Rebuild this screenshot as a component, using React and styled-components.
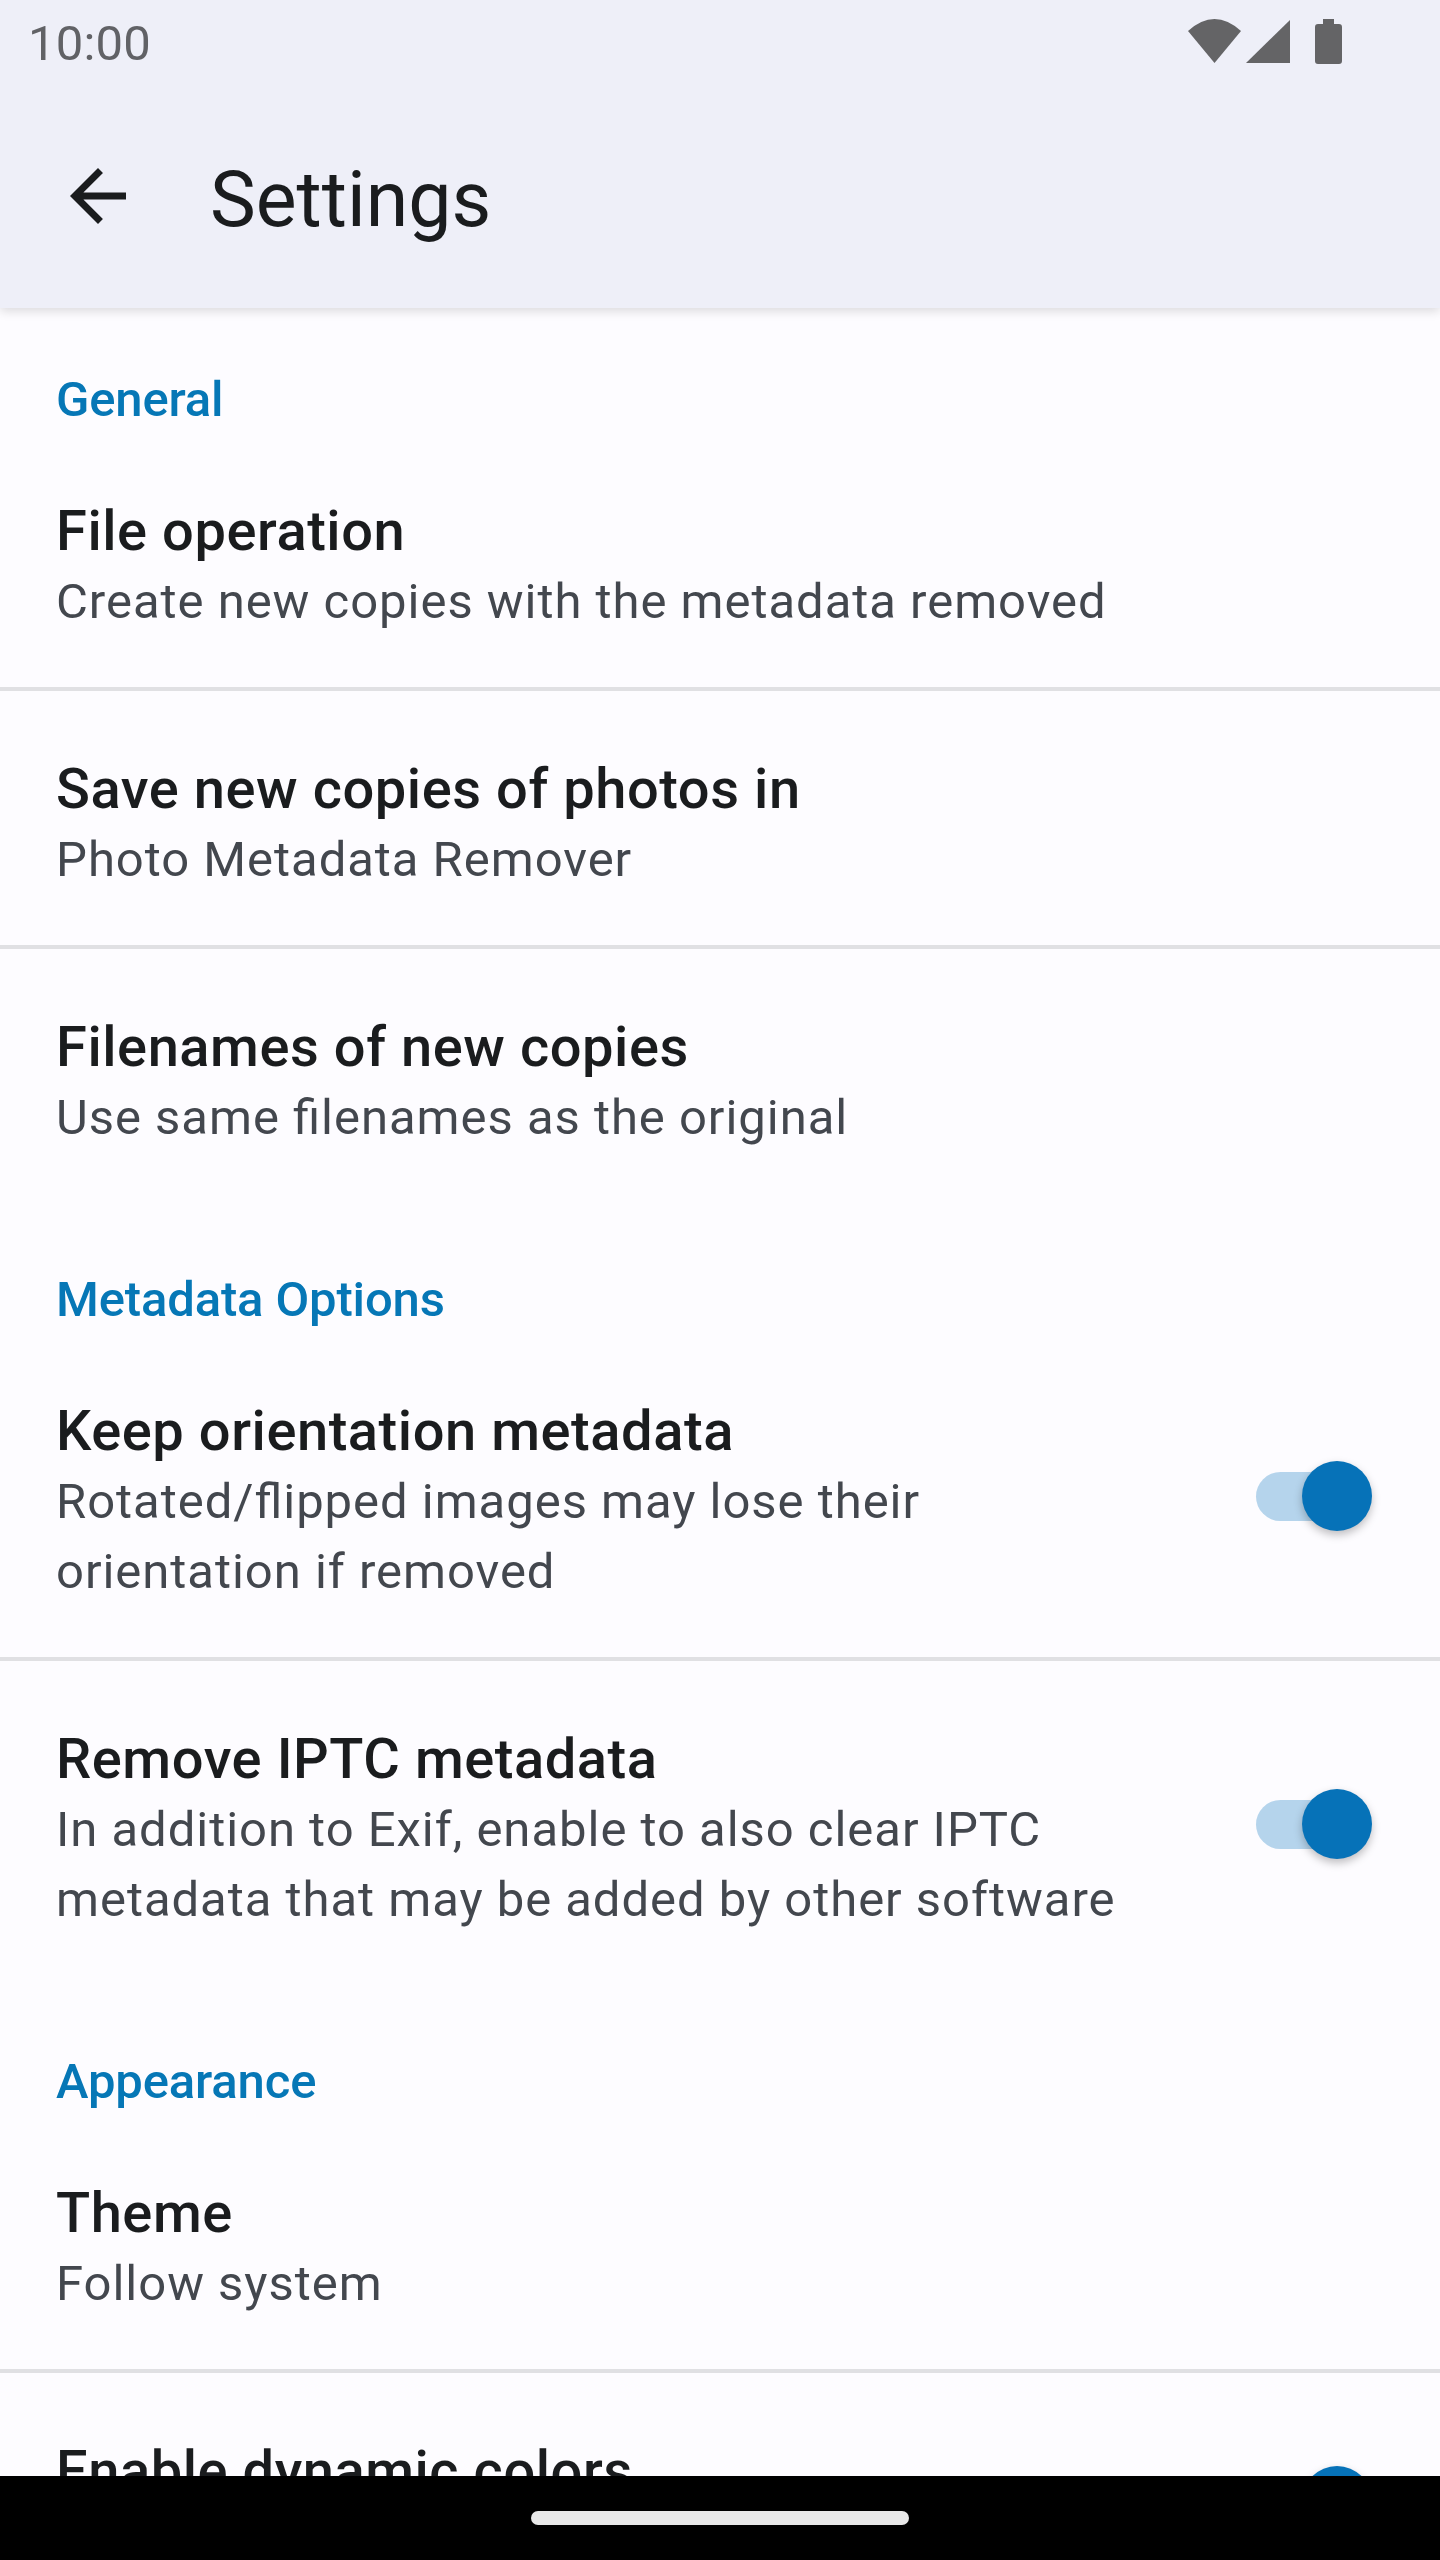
import React from 'react';
import styled, { createGlobalStyle } from 'styled-components';

const GlobalStyle = createGlobalStyle`
  html, body {
    margin: 0;
    padding: 0;
    background: #fdfcff;
  }
  body {
    font-family: Roboto, "Noto Sans", sans-serif;
  }
`;

const Screen = styled.div`
  display: flex;
  flex-direction: column;
  width: 1440px;
  height: 2560px;
  overflow: hidden;
  background: #fdfcff;
`;

const Header = styled.header`
  position: relative;
  z-index: 1;
  flex: none;
  height: 308px;
  box-sizing: border-box;
  background: #eeeff8;
  box-shadow: 0 3px 10px rgba(0, 0, 0, 0.14);
`;

const StatusBar = styled.div`
  display: flex;
  justify-content: space-between;
  height: 98px;
  box-sizing: border-box;
  padding: 0 98px 0 28px;
`;

const Time = styled.span`
  font-size: 49px;
  line-height: 88px;
  letter-spacing: 0.2px;
  color: #616266;
`;

const StatusIcons = styled.div`
  display: flex;
  align-items: flex-start;
  gap: 5px;
  padding-top: 19px;
  & svg {
    fill: #646466;
    display: block;
  }
  & svg:last-child {
    margin-left: 20px;
  }
`;

const Toolbar = styled.div`
  display: flex;
  align-items: center;
  height: 196px;
  padding-left: 56px;
`;

const BackButton = styled.button`
  display: flex;
  width: 84px;
  height: 84px;
  padding: 0;
  border: 0;
  background: none;
  & svg {
    fill: #1a1c1e;
  }
`;

const Title = styled.h1`
  margin: 8px 0 0 70px;
  font-size: 77px;
  font-weight: 400;
  line-height: 100px;
  color: #1a1c1e;
`;

const Content = styled.main`
  flex: 1;
  min-height: 0;
  overflow: hidden;
  padding-top: 55px;
`;

const Section = styled.section`
  & + & {
    padding-top: 60px;
  }
`;

const SectionLabel = styled.h2`
  margin: 0;
  padding: 4px 56px 0;
  font-size: 49px;
  font-weight: 500;
  line-height: 66px;
  letter-spacing: -0.15px;
  color: #0677b6;
`;

const Row = styled.div`
  display: flex;
  align-items: center;
  padding: 62px 72px 50px 56px;
  & + & {
    border-top: 4px solid #e0e0e3;
  }
`;

const Body = styled.div`
  flex: 1;
  min-height: 142px;
  max-width: 1080px;
`;

const RowTitle = styled.div`
  font-size: 56px;
  font-weight: 500;
  line-height: 72px;
  letter-spacing: 0.56px;
  color: #1a1c1e;
`;

const Summary = styled.div`
  font-size: 49px;
  line-height: 70px;
  letter-spacing: 0.97px;
  font-feature-settings: "liga" 1;
  color: #43474e;
`;

const Switch = styled.div`
  position: relative;
  flex: none;
  width: 112px;
  height: 49px;
  margin: 0 0 10px auto;
  border-radius: 25px;
  background: ${(p) => (p.$on ? '#b5d4ec' : '#c4c6cf')};
`;

const Thumb = styled.span`
  position: absolute;
  top: -10.5px;
  right: -4px;
  width: 70px;
  height: 70px;
  border-radius: 50%;
  background: #0672b8;
  box-shadow: 0 4px 8px rgba(0, 0, 0, 0.25);
`;

const NavBar = styled.div`
  position: relative;
  z-index: 1;
  display: flex;
  flex: none;
  justify-content: center;
  height: 84px;
  padding-top: 35px;
  box-sizing: border-box;
  background: #000;
`;

const HomePill = styled.div`
  width: 378px;
  height: 14px;
  border-radius: 7px;
  background: #e9e9e9;
`;

const sections = [
  {
    label: 'General',
    rows: [
      { title: 'File operation', summary: 'Create new copies with the metadata removed' },
      { title: 'Save new copies of photos in', summary: 'Photo Metadata Remover' },
      { title: 'Filenames of new copies', summary: 'Use same filenames as the original' },
    ],
  },
  {
    label: 'Metadata Options',
    rows: [
      {
        title: 'Keep orientation metadata',
        summary: 'Rotated/flipped images may lose their orientation if removed',
        toggle: true,
      },
      {
        title: 'Remove IPTC metadata',
        summary: 'In addition to Exif, enable to also clear IPTC metadata that may be added by other software',
        toggle: true,
      },
    ],
  },
  {
    label: 'Appearance',
    rows: [
      { title: 'Theme', summary: 'Follow system' },
      { title: 'Enable dynamic colors', toggle: true },
    ],
  },
];

const App = () => (
  <>
    <GlobalStyle />
    <Screen>
      <Header>
        <StatusBar>
          <Time>10:00</Time>
          <StatusIcons>
            <svg width="53" height="44" viewBox="0 0 53 44">
              <path d="M0 12Q26.5-12 53 12L26.5 44Z" />
            </svg>
            <svg width="44" height="44" viewBox="0 0 44 44">
              <path d="M0 44 44 1V44Z" />
            </svg>
            <svg width="27" height="45" viewBox="0 0 27 45">
              <path d="M8 0H19V5H24A3 3 0 0 1 27 8V42A3 3 0 0 1 24 45H3A3 3 0 0 1 0 42V8A3 3 0 0 1 3 5H8Z" />
            </svg>
          </StatusIcons>
        </StatusBar>
        <Toolbar>
          <BackButton aria-label="Back">
            <svg width="84" height="84" viewBox="0 0 24 24">
              <path d="M20 11H7.83l5.59-5.59L12 4l-8 8 8 8 1.41-1.41L7.83 13H20v-2z" />
            </svg>
          </BackButton>
          <Title>Settings</Title>
        </Toolbar>
      </Header>
      <Content>
        {sections.map((section) => (
          <Section key={section.label}>
            <SectionLabel>{section.label}</SectionLabel>
            {section.rows.map((row) => (
              <Row key={row.title}>
                <Body>
                  <RowTitle>{row.title}</RowTitle>
                  {row.summary && <Summary>{row.summary}</Summary>}
                </Body>
                {row.toggle && (
                  <Switch $on>
                    <Thumb />
                  </Switch>
                )}
              </Row>
            ))}
          </Section>
        ))}
      </Content>
      <NavBar>
        <HomePill />
      </NavBar>
    </Screen>
  </>
);

export default App;
